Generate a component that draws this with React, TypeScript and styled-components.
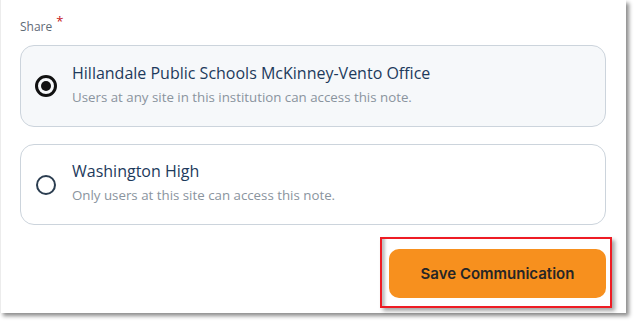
import React, { useState } from "react";
import styled, { createGlobalStyle } from "styled-components";

const GlobalStyle = createGlobalStyle`
    html, body {
        margin: 0;
        padding: 0;
        background: #ffffff;
    }
    body {
        min-height: 325px;
        font-family: "Open Sans", Lato, sans-serif;
    }
`

const options = [
    {
        id: "district",
        title: "Hillandale Public Schools McKinney-Vento Office",
        text: "Users at any site in this institution can access this note.",
    },
    {
        id: "site",
        title: "Washington High",
        text: "Only users at this site can access this note.",
    },
]

const App = () => {

    const [share, setShare] = useState<string>("district")

    return (
        <>
            <GlobalStyle />
            <Panel>
                <Label>Share<Required>*</Required></Label>
                <OptionList>
                    {options.map((el) => (
                        <OptionCard key={el.id} $selected={share === el.id} onClick={() => setShare(el.id)}>
                            <Radio $checked={share === el.id} />
                            <OptionText>
                                <OptionTitle>{el.title}</OptionTitle>
                                <OptionSub>{el.text}</OptionSub>
                            </OptionText>
                        </OptionCard>
                    ))}
                </OptionList>
                <Footer>
                    <Highlight>
                        <SaveButton type="button">Save Communication</SaveButton>
                    </Highlight>
                </Footer>
            </Panel>
        </>
    )
}

export default App;

const Panel = styled.div`
    box-sizing: border-box;
    width: 626px;
    height: 313px;
    padding: 16px 20px 0 19px;
    background: #ffffff;
    border-left: 1px solid #ececec;
    box-shadow: 3px 3px 4px rgba(0, 0, 0, 0.45);
    display: flex;
    flex-direction: column;
`

const Label = styled.div`
    font-size: 12px;
    line-height: 20px;
    color: #5f6b77;
`

const Required = styled.span`
    color: #c4161c;
    font-size: 13px;
    position: relative;
    top: -5px;
    margin-left: 4px;
`

const OptionList = styled.div`
    display: flex;
    flex-direction: column;
    gap: 17px;
    margin-top: 8px;
`

const OptionCard = styled.div<{ $selected: boolean }>`
    box-sizing: border-box;
    flex: none;
    height: ${p => p.$selected ? "82px" : "81px"};
    display: flex;
    align-items: center;
    gap: 15px;
    padding: 0 14px;
    border: 1px solid #ccd4dc;
    border-radius: 14px;
    background: ${p => p.$selected ? "#f6f8fa" : "#ffffff"};
    cursor: pointer;
`

const Radio = styled.span<{ $checked: boolean }>`
    box-sizing: border-box;
    flex: none;
    width: ${p => p.$checked ? "22px" : "20px"};
    height: ${p => p.$checked ? "22px" : "20px"};
    margin: ${p => p.$checked ? "0" : "0 1px"};
    border-radius: 50%;
    border: ${p => p.$checked ? "3px solid #111111" : "2px solid #2b3d50"};
    display: flex;
    align-items: center;
    justify-content: center;
    &::after {
        content: "";
        display: ${p => p.$checked ? "block" : "none"};
        width: 10px;
        height: 10px;
        border-radius: 50%;
        background: #111111;
    }
`

const OptionText = styled.div`
    display: flex;
    flex-direction: column;
    gap: 4px;
    margin-top: -4px;
`

const OptionTitle = styled.div`
    font-size: 16px;
    line-height: 21px;
    font-weight: 500;
    color: #1d3a5c;
`

const OptionSub = styled.div`
    font-size: 13.3px;
    line-height: 18px;
    color: #8a949e;
`

const Footer = styled.div`
    flex: none;
    display: flex;
    justify-content: flex-end;
    margin-top: 12px;
    margin-right: -6px;
`

const Highlight = styled.div`
    box-sizing: border-box;
    width: 232px;
    height: 71px;
    padding: 10px 4px 8px 7px;
    border: 2px solid #ee1c24;
    box-shadow: 3px 3px 4px rgba(0, 0, 0, 0.35), inset 6px 0 3px -3px rgba(0, 0, 0, 0.25);
`

const SaveButton = styled.button`
    width: 100%;
    height: 100%;
    border: none;
    border-radius: 10px;
    background: #f7901e;
    color: #262626;
    font-family: Inter, "Noto Sans", sans-serif;
    font-size: 15px;
    font-weight: 600;
    cursor: pointer;
`
